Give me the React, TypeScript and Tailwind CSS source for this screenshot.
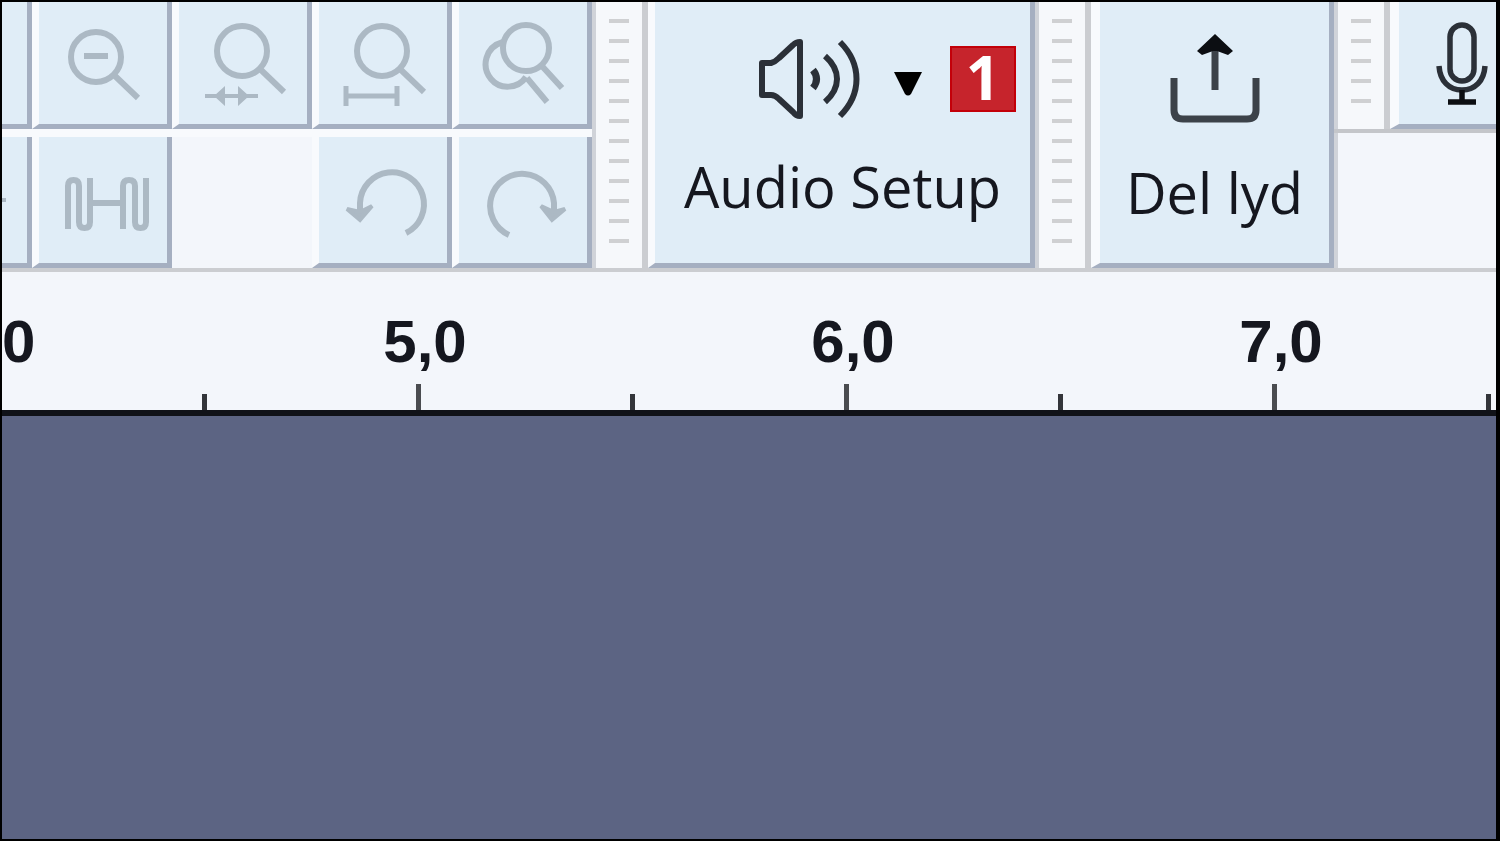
import type { ReactNode } from 'react'

type ToolProps = {
  label: string
  children: ReactNode
}

function ToolButton({ label, children }: ToolProps) {
  return (
    <button
      type="button"
      aria-label={label}
      className="flex w-[140px] shrink-0 items-center justify-center border-t-0 border-r-[5px] border-b-[5px] border-l-[7px] border-r-[#a5afc1] border-b-[#a5afc1] border-l-[#f8fafd] bg-[#e0edf7]"
    >
      <svg
        viewBox="0 0 96 96"
        className="size-24 text-[#acb9c4]"
        fill="none"
        stroke="currentColor"
        strokeWidth="6"
      >
        {children}
      </svg>
    </button>
  )
}

function Grip({ dots }: { dots: number }) {
  return (
    <div className="flex w-[56px] shrink-0 flex-col items-center gap-4 border-r-[6px] border-l-4 border-r-[#cbcdd1] border-l-[#d0d3d9] bg-[#f6f8fb] pt-[17px]">
      {Array.from({ length: dots }, (_, i) => (
        <span key={i} className="h-1 w-5 bg-[#cfd0d2]" />
      ))}
    </div>
  )
}

function EditTools() {
  return (
    <div className="flex shrink-0 flex-col gap-2 bg-[#f8fafd]">
      <div className="flex h-[127px]">
        <div className="w-[30px] border-r-[5px] border-b-[5px] border-[#a5afc1] bg-[#e0edf7]" />
        <ToolButton label="Zoom out">
          <circle cx="41" cy="42" r="25" />
          <path d="M59 60 83 83M29 41h24" />
        </ToolButton>
        <ToolButton label="Fit selection">
          <circle cx="47" cy="36" r="25" />
          <path d="M65 54 89 77" />
          <path d="M10 81h53" strokeWidth="4" />
          <path d="M19 81 30 71v20zM54 81 43 71v20z" fill="currentColor" stroke="none" />
        </ToolButton>
        <ToolButton label="Fit project">
          <circle cx="47" cy="36" r="25" />
          <path d="M65 54 89 77" />
          <path d="M10 81h52M11 71v20M62 71v20" strokeWidth="5" />
        </ToolButton>
        <ToolButton label="Toggle zoom">
          <circle cx="51" cy="33" r="23" />
          <path d="M66 50 87 73M52 63 72 87" />
          <path d="M28 27C10 32 6 52 16 64c9 11 27 10 35-2" />
        </ToolButton>
      </div>
      <div className="flex h-[131px]">
        <div className="flex w-[30px] items-center border-r-[5px] border-b-[5px] border-[#a5afc1] bg-[#e0edf7]">
          <span className="h-1 w-1 bg-[#acb9c4]" />
        </div>
        <ToolButton label="Silence selection">
          <path d="M13 77V34q0-6 5.500-6t5.500 6v36q0 6 5.500 6t5.500-6V26M35 51h33M68 77V34q0-6 6-6t6 6v36q0 6 5.500 6t5.500-6V26" />
        </ToolButton>
        <div className="w-[140px] bg-[#f3f6fb]" />
        <ToolButton label="Undo">
          <path d="M25 62V51a32 32 0 1 1 46 30" />
          <path d="M12 57 25 68 37 54 25 60z" fill="currentColor" strokeWidth="4" />
        </ToolButton>
        <ToolButton label="Redo">
          <path d="M79 62V51a32 32 0 1 0-45 32" />
          <path d="M90 57 77 68 66 54 79 60z" fill="currentColor" strokeWidth="4" />
        </ToolButton>
      </div>
    </div>
  )
}

function AudioSetup() {
  return (
    <button
      type="button"
      className="flex w-[387px] shrink-0 flex-col items-center border-r-[5px] border-b-[5px] border-l-[7px] border-r-[#a5afc1] border-b-[#a5afc1] border-l-[#f8fafd] bg-[#e0edf7] pt-9"
    >
      <span className="flex items-center self-end pr-[14px]">
        <svg
          viewBox="0 0 104 82"
          className="mr-8 h-[82px] w-[104px] text-[#2b3038]"
          fill="none"
          stroke="currentColor"
          strokeWidth="6"
          strokeLinejoin="round"
        >
          <path d="M4 25h9Q17 24 21 20L35 7Q38 4 42 4V78Q38 78 35 74L21 61Q17 57 13 57H4z" />
          <path d="M55 32Q62 41 55 50" strokeWidth="7" />
          <path d="M67 18C83 32 83 50 67 64M82 4C104 26 104 56 82 78" />
        </svg>
        <svg viewBox="0 0 28 26" className="mt-2 mr-7 h-[26px] w-7" fill="#000">
          <path d="M0 2H28L17 24Q14 27 11 24z" />
        </svg>
        <span className="flex size-[66px] items-center justify-center border-2 border-[#c30009] bg-[#c6242c] pb-1 text-[60px] leading-[60px] font-bold text-white">
          1
        </span>
      </span>
      <span className="mt-9 text-[56px] leading-[60px] font-medium whitespace-nowrap">
        Audio Setup
      </span>
    </button>
  )
}

function ShareAudio() {
  return (
    <button
      type="button"
      className="flex w-[243px] shrink-0 flex-col items-center border-r-[5px] border-b-[5px] border-l-[9px] border-r-[#a5afc1] border-b-[#a5afc1] border-l-[#f8fafd] bg-[#e0edf7] pt-8"
    >
      <svg
        viewBox="0 0 90 92"
        className="h-[92px] w-[90px] text-[#3c4249]"
        fill="none"
        stroke="currentColor"
        strokeWidth="7"
      >
        <path d="M4 44V76q0 9 9 9H77q9 0 9-9V44M45 56V12" />
        <path d="M45 0 63 17 58 21 47 17H43L32 21 27 17z" fill="#0c0e12" stroke="none" />
      </svg>
      <span className="mt-9 text-[56px] leading-[60px] font-medium whitespace-nowrap">
        Del lyd
      </span>
    </button>
  )
}

function RecordMeter() {
  return (
    <div className="flex min-w-0 flex-1 flex-col">
      <div className="flex h-[131px] border-b-4 border-[#c4c6ca]">
        <Grip dots={5} />
        <button
          type="button"
          aria-label="Record meter"
          className="flex min-w-0 flex-1 justify-end border-b-[5px] border-l-[9px] border-b-[#a5afc1] border-l-[#f8fafd] bg-[#e0edf7] pt-[18px] pr-2"
        >
          <svg
            viewBox="0 0 52 86"
            className="h-[86px] w-[52px] shrink-0 text-[#2b3038]"
            fill="none"
            stroke="currentColor"
            strokeWidth="5.500"
          >
            <rect x="14" y="5" width="24" height="56" rx="12" />
            <path d="M3 46C4 61 13 70 26 70S48 61 49 46" />
            <path d="M26 70v12M12 82h28" stroke="#0c0e12" />
          </svg>
        </button>
      </div>
      <div className="flex-1 border-l-4 border-[#d0d3d9]" />
    </div>
  )
}

const seconds = ['5,0', '6,0', '7,0']

function Ruler() {
  return (
    <div className="overflow-hidden border-t-4 border-b-[6px] border-t-[#cbcdd1] border-b-[#101218] pt-10 font-['Liberation_Sans',sans-serif] text-[60px] leading-[60px] font-bold">
      <ol className="flex">
        {/* the view is scrolled, so the first second starts halfway */}
        <li className="w-[205px] shrink-0">
          <div>0</div>
          <div className="mt-2 flex h-[30px] items-end">
            <span className="h-4 flex-1 border-r-[5px] border-[#33353a]" />
          </div>
        </li>
        {seconds.map((s) => (
          <li key={s} className="w-[428px] shrink-0">
            <div className="pl-2 text-center">{s}</div>
            <div className="mt-2 flex h-[30px] items-end">
              <span className="h-[26px] flex-1 border-r-[5px] border-[#4a4c50]" />
              <span className="h-4 flex-1 border-r-[5px] border-[#33353a]" />
            </div>
          </li>
        ))}
      </ol>
    </div>
  )
}

export default function App() {
  return (
    <div className="flex min-h-screen flex-col overflow-hidden border-2 border-r-4 border-black bg-[#f3f6fb] font-['Open_Sans',sans-serif] text-[#15171f]">
      <div className="flex overflow-hidden">
        <EditTools />
        <Grip dots={12} />
        <AudioSetup />
        <Grip dots={12} />
        <ShareAudio />
        <RecordMeter />
      </div>
      <Ruler />
      <main className="flex-1 bg-[#5c6483]" />
    </div>
  )
}
